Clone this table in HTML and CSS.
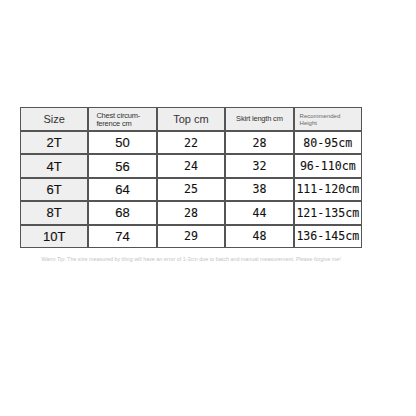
FILE: index.html
```html
<!DOCTYPE html>
<html>
<head>
<meta charset="utf-8">
<link rel="stylesheet" href="styles.css">
</head>
<body>
<div class="chart">
  <div class="table">
    <div class="cell head big">Size</div>
    <div class="cell head small left">Chest circum-<br>ference cm</div>
    <div class="cell head big">Top cm</div>
    <div class="cell head small">Skirt length cm</div>
    <div class="cell head tiny">Recommended<br>Height</div>

    <div class="cell first sans">2T</div>
    <div class="cell sans">50</div>
    <div class="cell mono">22</div>
    <div class="cell mono">28</div>
    <div class="cell mono">80-95cm</div>

    <div class="cell first sans">4T</div>
    <div class="cell sans">56</div>
    <div class="cell mono">24</div>
    <div class="cell mono">32</div>
    <div class="cell mono">96-110cm</div>

    <div class="cell first sans">6T</div>
    <div class="cell sans">64</div>
    <div class="cell mono">25</div>
    <div class="cell mono">38</div>
    <div class="cell mono">111-120cm</div>

    <div class="cell first sans">8T</div>
    <div class="cell sans">68</div>
    <div class="cell mono">28</div>
    <div class="cell mono">44</div>
    <div class="cell mono">121-135cm</div>

    <div class="cell first sans">10T</div>
    <div class="cell sans">74</div>
    <div class="cell mono">29</div>
    <div class="cell mono">48</div>
    <div class="cell mono">136-145cm</div>
  </div>
  <p class="tip">Warm Tip: The size measured by tiling will have an error of 1-3cm due to batch and manual measurement. Please forgive me!</p>
</div>
</body>
</html>
```
FILE: styles.css
```css
html, body {
  margin: 0;
  padding: 0;
  background: #ffffff;
}

.chart {
  padding: 107px 0 0 20px;
  width: 342px;
}

.table {
  display: grid;
  grid-template-columns: repeat(5, 1fr);
  grid-template-rows: 22px repeat(5, 21.4px);
  gap: 2px;
  padding: 1px;
  background: #555555;
}

.cell {
  background: #ffffff;
  display: flex;
  align-items: center;
  justify-content: center;
  color: #111111;
  overflow: hidden;
  white-space: nowrap;
}

.head {
  background: #eeeeee;
  font-family: "Liberation Sans", Arial, sans-serif;
  color: #2a2a2a;
}

.big {
  font-size: 11px;
  color: #333333;
}

.small {
  font-size: 7.5px;
  line-height: 8px;
  letter-spacing: -0.2px;
  color: #333333;
}

.left {
  justify-content: flex-start;
  align-items: flex-start;
  padding: 4px 0 0 7px;
}

.tiny {
  font-size: 6px;
  line-height: 6.5px;
  color: #666666;
  justify-content: flex-start;
  align-items: flex-start;
  padding: 5px 0 0 5px;
}

.first {
  background: #efefef;
}

.sans {
  font-family: "Liberation Sans Narrow", "Liberation Sans", Arial, sans-serif;
  font-size: 13px;
  -webkit-text-stroke: 0.15px #111111;
}

.mono {
  font-family: "DejaVu Sans Mono", monospace;
  font-size: 11.6px;
  -webkit-text-stroke: 0.1px #111111;
}

.tip {
  margin: 8px 0 0 0;
  text-align: center;
  font-family: "Liberation Sans", Arial, sans-serif;
  font-size: 5.4px;
  color: #c4c4c4;
  white-space: nowrap;
}
```
